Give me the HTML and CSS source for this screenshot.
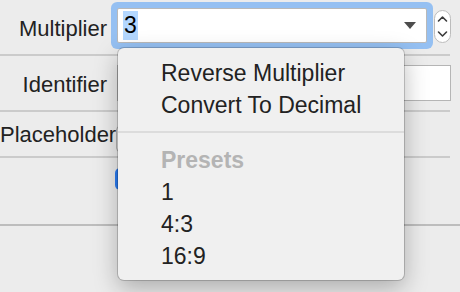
FILE: index.html
```html
<!DOCTYPE html>
<html lang="en">
<head>
    <meta charset="UTF-8">
    <title>Multiplier</title>
    <link rel="stylesheet" href="styles.css">
</head>
<body>
    <div class="panel">
        <div class="row row-first">
            <div class="label">Multiplier</div>
            <div class="combo">
                <span class="combo-value"><span class="selected">3</span></span>
                <span class="combo-arrow"></span>
            </div>
            <div class="stepper">
                <svg width="17" height="33" viewBox="0 0 17 33">
                    <path d="M4.5 11 L8.5 7 L12.5 11" fill="none" stroke="#3a3a3a" stroke-width="1.6" stroke-linecap="round" stroke-linejoin="round"/>
                    <path d="M4.5 22 L8.5 26 L12.5 22" fill="none" stroke="#3a3a3a" stroke-width="1.6" stroke-linecap="round" stroke-linejoin="round"/>
                </svg>
            </div>
        </div>
        <div class="sep"></div>
        <div class="row">
            <div class="label">Identifier</div>
            <div class="field"></div>
        </div>
        <div class="sep"></div>
        <div class="row row-third">
            <div class="label">Placeholder</div>
            <div class="popup"></div>
        </div>
        <div class="sep"></div>
        <div class="row row-button">
            <div class="push-button"></div>
        </div>
        <div class="sep sep-dark"></div>
    </div>

    <!-- popup menu of the combo box -->
    <div class="menu">
        <div class="menu-item">Reverse Multiplier</div>
        <div class="menu-item">Convert To Decimal</div>
        <div class="menu-sep"></div>
        <div class="menu-item menu-header">Presets</div>
        <div class="menu-item">1</div>
        <div class="menu-item">4:3</div>
        <div class="menu-item">16:9</div>
    </div>
</body>
</html>
```

FILE: styles.css
```css
body {
    margin: 0;
    width: 460px;
    height: 292px;
    overflow: hidden;
    background: #ececec;
    font-family: "Liberation Sans", Arial, sans-serif;
    color: #222;
    position: relative;
}

.panel {
    display: flex;
    flex-direction: column;
}

.row {
    display: flex;
    align-items: flex-start;
    height: 54px;
    padding-right: 9px;
}

.label {
    width: 107px;
    margin-right: 10px;
    text-align: right;
    font-size: 22px;
    line-height: 22px;
    padding-top: 18px;
    white-space: nowrap;
}

.combo {
    margin-top: 8px;
    width: 308px;
    height: 33px;
    background: #fff;
    border: 1px solid #b9b9b9;
    border-radius: 2px;
    box-shadow: 0 0 0 6px #95c0f2;
    display: flex;
    align-items: center;
    justify-content: space-between;
}

.combo-value {
    padding-left: 5px;
    font-size: 23px;
    color: #000;
}

.selected {
    background: #b3d7ff;
    display: inline-block;
    padding: 3px 1px 3px 1px;
    line-height: 23px;
}

.combo-arrow {
    width: 0;
    height: 0;
    border-left: 6px solid transparent;
    border-right: 6px solid transparent;
    border-top: 7px solid #4d4d4d;
    margin-right: 10px;
}

.stepper {
    margin-top: 10px;
    margin-left: 7px;
    width: 17px;
    height: 33px;
    background: #fff;
    border: 1px solid #bcbcbc;
    border-radius: 9px;
    box-sizing: border-box;
}

.stepper svg {
    display: block;
    margin: -1px;
}

.field {
    margin-top: 9px;
    flex: 1;
    height: 34px;
    background: #fff;
    border: 1px solid #b5b5b5;
}

.row-third {
    height: 44px;
}

.row-third .label {
    padding-top: 12px;
}

.popup {
    margin-top: 14px;
    margin-left: -1px;
    width: 180px;
    height: 24px;
    border-radius: 4px;
    background: #fbfbfb;
    border: 1px solid #b0b0b0;
}

.row-button {
    height: 66px;
    padding-left: 115px;
}

.push-button {
    margin-top: 10px;
    width: 80px;
    height: 22px;
    border-radius: 5px;
    background: #2a7cf2;
}

.sep {
    height: 2px;
    margin-right: 10px;
    background: #cbcbcb;
}

.sep-dark {
    margin-right: 0;
    background: #bdbdbd;
}

.menu {
    position: absolute;
    left: 118px;
    top: 48px;
    width: 286px;
    height: 232px;
    box-sizing: border-box;
    padding: 9px 0 8px;
    background: #f0f0f0;
    border-radius: 6px;
    box-shadow: 0 0 0 1px rgba(0, 0, 0, 0.18), 0 8px 24px rgba(0, 0, 0, 0.28);
}

.menu-item {
    padding-left: 43px;
    font-size: 23px;
    line-height: 32px;
    height: 32px;
    white-space: nowrap;
}

.menu-header {
    font-weight: bold;
    color: #b4b4b4;
}

.menu-sep {
    height: 2px;
    margin: 10px 0 11px;
    background: #dcdcdc;
}
```
